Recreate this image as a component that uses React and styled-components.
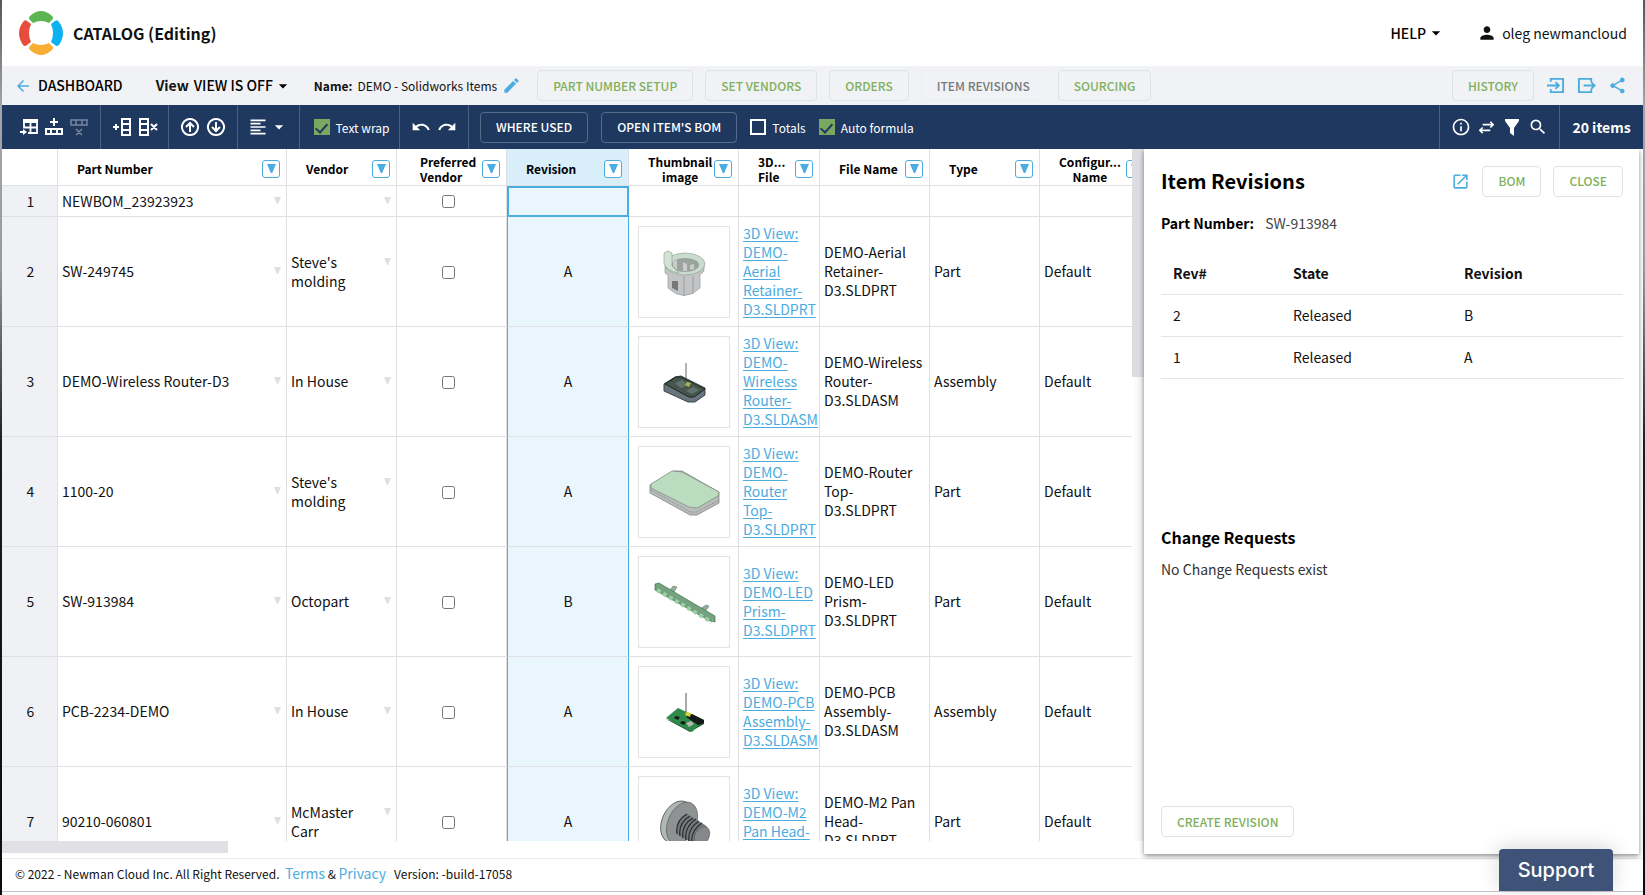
import React from 'react';
import styled, { createGlobalStyle, css } from 'styled-components';
import {
    MdArrowBack,
    MdArrowDropDown,
    MdEdit,
    MdFormatAlignLeft,
    MdInfoOutline,
    MdOpenInNew,
    MdPerson,
    MdRedo,
    MdSearch,
    MdShare,
    MdUndo
} from 'react-icons/md';

const colors = {
    navy: '#1f385f',
    blue: '#4bacdf',
    green: '#7fb05c',
    line: '#dfe0e4',
    bar: '#f1f2f5'
};

const GlobalStyle = createGlobalStyle`
    * {
        box-sizing: border-box;
    }

    body {
        margin: 0;
        color: #111;
        font-family: "Noto Sans CJK SC", "Noto Sans", sans-serif;
        font-size: 14px;
        line-height: 19px;
    }

    button, input {
        font: inherit;
    }

    svg {
        display: block;
        flex: none;
    }
`;

const Frame = styled.div`
    height: 100vh;
    padding: 0 2px;
    background: linear-gradient(#55565a, #a5a6a9 12%, #98999c 30%, #1b1b1f 50%, #0c0c10);
`;

const Page = styled.div`
    display: flex;
    flex-direction: column;
    height: 100%;
    background: #fff;
`;

const Header = styled.header`
    display: flex;
    flex: none;
    align-items: center;
    height: 66px;
    padding: 0 16px;
`;

const Title = styled.h1`
    flex: 1;
    margin: 0 0 0 9px;
    font-size: 16px;
    font-weight: 700;
    line-height: 24px;
`;

const PlainButton = styled.button`
    display: flex;
    align-items: center;
    padding: 0;
    border: 0;
    background: none;
    color: ${props => props.$color || '#000'};
    font-size: 14px;
    font-weight: ${props => props.$weight || 400};
    white-space: nowrap;
    cursor: pointer;
`;

const User = styled.div`
    display: flex;
    align-items: center;
    gap: 5px;
    margin-left: 31px;
`;

const SubBar = styled.nav`
    display: flex;
    flex: none;
    align-items: center;
    height: 39px;
    padding: 0 16px 0 12px;
    background: ${colors.bar};
    white-space: nowrap;
`;

const BackLink = styled.a`
    display: flex;
    align-items: center;
    gap: 6px;
    color: #000;
    font-weight: 500;
    text-decoration: none;

    svg {
        color: ${colors.blue};
    }
`;

const ViewSwitch = styled.div`
    display: flex;
    gap: 5px;
    margin: 0 21px 0 33px;
    font-weight: 700;
`;

const CatalogName = styled.div`
    display: flex;
    align-items: center;
    gap: 5px;
    margin-right: 16px;
    font-size: 12px;
`;

const ButtonRow = styled.div`
    display: flex;
    flex: ${props => (props.$grow ? 1 : 'none')};
    align-items: center;
    gap: 12px;
`;

const OutlineButton = styled.button`
    height: 31px;
    padding: 0 15px;
    border: 1px solid #dfe2e2;
    border-radius: 4px;
    background: transparent;
    color: ${colors.green};
    font-size: 12px;
    font-weight: 500;
    line-height: 18px;
    white-space: nowrap;
    cursor: pointer;

    ${props => props.$active && css`
        border-color: #eceef0;
        color: #76797d;
    `}

    ${props => props.$dark && css`
        border-color: #566a8a;
        color: #fff;
    `}
`;

const Toolbar = styled.div`
    display: flex;
    flex: none;
    height: 44px;
    background: ${colors.navy};
    color: #fff;
`;

const ToolGroup = styled.div`
    display: flex;
    flex: ${props => (props.$grow ? 1 : 'none')};
    align-items: center;
    justify-content: ${props => (props.$grow ? 'flex-start' : 'center')};
    gap: ${props => props.$gap || 6}px;
    width: ${props => (props.$width ? `${props.$width}px` : 'auto')};
    padding-left: ${props => props.$start || 0}px;
    border-right: 1px solid #4c6080;

    &:last-child {
        border-right: 0;
    }
`;

const ItemCount = styled.span`
    font-weight: 700;
`;

const CheckLabel = styled.label`
    display: flex;
    align-items: center;
    gap: 6px;
    font-size: 12px;
    white-space: nowrap;
`;

const ToolCheck = styled.input`
    display: grid;
    place-items: center;
    width: 16px;
    height: 16px;
    margin: 0;
    border: 2px solid #fff;
    appearance: none;

    &:checked {
        border-color: #79a860;
        background: #79a860;
    }

    &:checked::after {
        content: '';
        width: 5px;
        height: 10px;
        margin-bottom: 3px;
        border: solid ${colors.navy};
        border-width: 0 2px 2px 0;
        transform: rotate(42deg);
    }
`;

const Main = styled.main`
    display: flex;
    flex: 1;
    min-height: 0;
`;

const GridArea = styled.section`
    display: grid;
    flex: 1;
    grid-template: minmax(0, 1fr) 17px / minmax(0, 1fr) 12px;
    min-width: 0;
`;

const GridViewport = styled.div`
    overflow: hidden;
`;

const VerticalTrack = styled.div`
    background: linear-gradient(90deg, #fff, #f1f1f3);
`;

const VerticalThumb = styled.div`
    height: 33%;
    background: #dcdde0;
`;

const HorizontalThumb = styled.div`
    width: 20%;
    height: 12px;
    background: #e0e0e5;
`;

const Grid = styled.table`
    width: 1149px;
    border-spacing: 0;
    table-layout: fixed;
`;

const HeadCell = styled.th`
    height: 37px;
    padding: 3px 6px 0 19px;
    border-right: 1px solid ${colors.line};
    border-bottom: 1px solid ${colors.line};
    background: ${props => (props.$selected ? '#d8eef9' : '#fff')};
    color: #000;
    font-size: 12px;
    font-weight: 700;
    line-height: 15px;
`;

const HeadInner = styled.div`
    display: flex;
    align-items: center;
    justify-content: space-between;
    gap: 2px;
    text-align: ${props => (props.$center ? 'center' : 'left')};
    white-space: nowrap;
`;

const HeadText = styled.span`
    padding-left: ${props => (props.$shift ? 4 : 0)}px;
`;

const FilterButton = styled.button`
    display: flex;
    flex: none;
    align-items: center;
    justify-content: center;
    width: 18px;
    height: 18px;
    padding: 0;
    border: 1px solid ${colors.blue};
    border-radius: 3px;
    background: #fff;
    color: ${colors.blue};
`;

const Cell = styled.td`
    height: ${props => (props.$short ? 31 : 110)}px;
    padding: 0 4px;
    border-right: 1px solid ${colors.line};
    border-bottom: 1px solid ${colors.line};
    overflow: hidden;
    text-align: ${props => (props.$center ? 'center' : 'left')};

    ${props => props.$selected && css`
        border-right-color: ${colors.blue};
        border-left: 1px solid ${colors.blue};
        background: #eaf6fd;
    `}

    ${props => props.$focused && css`
        border: 2px solid ${colors.blue};
    `}
`;

const NumberCell = styled.th`
    padding: 0 0 0 2px;
    border-right: 1px solid ${colors.line};
    border-bottom: 1px solid ${colors.line};
    background: #f0f1f5;
    font-weight: 400;
`;

const Editable = styled.div`
    display: flex;
    align-items: flex-start;
    justify-content: space-between;
    min-height: 19px;
    padding-right: 1px;
`;

const CellMarker = styled.span`
    padding-top: 5px;
    color: #dfdfe2;
`;

const GridCheck = styled.input`
    width: 13px;
    height: 13px;
    margin: 5px 6px 0 0;
`;

const ViewLink = styled.a`
    color: ${colors.blue};
    text-underline-offset: 2px;
`;

const Thumb = styled.div`
    width: 92px;
    height: 92px;
    margin: 0 auto;
    border: 1px solid #e3e4e6;
`;

const Panel = styled.aside`
    display: flex;
    flex: 0 0 495px;
    flex-direction: column;
    margin: 0 4px 4px 0;
    padding: 15px 16px 15px 17px;
    background: #fff;
    box-shadow: 0 2px 5px rgba(0, 0, 0, 0.45);
    clip-path: inset(0 -6px -8px -10px);
`;

const PanelHead = styled.div`
    display: flex;
    align-items: center;
    gap: 12px;
    height: 34px;
    color: ${colors.blue};
`;

const PanelTitle = styled.h2`
    flex: 1;
    margin: 0;
    color: #000;
    font-size: 20px;
    font-weight: 700;
    line-height: 28px;
`;

const PartLine = styled.p`
    display: flex;
    gap: 11px;
    margin: 16px 0 20px;
    color: #444;

    strong {
        color: #000;
    }
`;

const RevisionTable = styled.table`
    width: 100%;
    border-spacing: 0;
    table-layout: fixed;
    text-align: left;

    th, td {
        height: 42px;
        padding: 0 12px;
        border-bottom: 1px solid #e3e5e6;
    }
`;

const SectionTitle = styled.h3`
    margin: 146px 0 11px;
    color: #000;
    font-size: 16px;
    font-weight: 700;
    line-height: 24px;
`;

const Note = styled.p`
    flex: 1;
    margin: 0;
    color: #333;
`;

const PanelFoot = styled.div`
    padding-bottom: 2px;
`;

const Footer = styled.footer`
    display: flex;
    flex: none;
    align-items: center;
    height: 34px;
    margin-bottom: 3px;
    padding: 0 30px 0 13px;
    border-top: 1px solid #ebecee;
    border-bottom: 1px solid #c4c5c8;
    font-size: 12px;

    a {
        color: ${colors.blue};
        font-size: 14px;
        text-decoration: none;
    }
`;

const Legal = styled.span`
    flex: 1;
    padding-bottom: 3px;
    white-space: pre;
`;

const SupportButton = styled.button`
    z-index: 1;
    align-self: flex-end;
    flex: none;
    width: 114px;
    height: 42px;
    border: 0;
    border-radius: 4px 4px 0 0;
    background: #3e5377;
    box-shadow: 0 -2px 20px rgba(0, 0, 0, 0.16);
    color: #fff;
    font-family: Inter, sans-serif;
    font-size: 20px;
    font-weight: 500;
`;

const Logo = () => <svg width="46" height="46" viewBox="0 0 46 46">
    <path fill="#5cb552" d="M12 6 Q23 -4 34 6 Q36 8 34 10 L31 13 Q23 9 15 13 L12 10 Q10 8 12 6Z" />
    <path fill="#f9ae35" d="M12 40 Q23 50 34 40 Q36 38 34 36 L31 33 Q23 37 15 33 L12 36 Q10 38 12 40Z" />
    <path fill="#e84c3d" d="M5 12 Q-3 23 5 35 Q7 37 9 35 L13 32 Q9 23 13 14 L9 11 Q7 9 5 12Z" />
    <path fill="#0cb2f0" d="M41 12 Q49 23 41 35 Q39 37 37 35 L33 32 Q37 23 33 14 L37 11 Q39 9 41 12Z" />
</svg>;

const Stroke = ({ d, size = 20, width = 2, color = 'currentColor' }) =>
    <svg width={size} height={size} viewBox="0 0 20 20" fill="none" stroke={color} strokeWidth={width}>
        <path d={d} />
    </svg>;

const Triangle = ({ size }) => <svg width={size} height={size} viewBox="0 0 8 8" fill="currentColor">
    <path d="M0 0H8L4.600 8H3.400Z" />
</svg>;

const InsertRowIcon = () => <svg width="20" height="20" viewBox="0 0 20 20">
    <path fill="currentColor" d="M4 2H19V6H4Z" />
    <path fill="none" stroke="currentColor" strokeWidth="1.800" d="M5 4V10.500H18M18 4V16H9M11.500 5V16" />
    <path fill="currentColor" d="M1 14H4V12L8 15L4 18V16H1Z" />
</svg>;

const thumbs = {
    retainer: <>
        <path fill="#c2c4c6" stroke="#8f9294" strokeWidth=".6" d="M26 38V46L29 48V61Q45 76 61 61V48L65 44V38Z" />
        <ellipse cx="46" cy="37" rx="20" ry="11" fill="#c9dccd" stroke="#8a9b8e" strokeWidth=".6" />
        <ellipse cx="46" cy="38" rx="14" ry="7" fill="#9aa39e" />
        <path fill="#c9ccca" d="M34 39V34L38 33V43ZM44 44V35L48 37V44ZM51 38L55 37V42L51 43Z" />
        <path fill="#d2e3d5" stroke="#8a9b8e" strokeWidth=".6" d="M25 35V26L29 24L33 26L33 39L40 46Q28 44 25 37Z" />
        <path fill="#777" d="M33 54H39V64L33 61Z" />
        <path fill="none" stroke="#9b9d9f" d="M45 49V69M54 49V67" />
    </>,
    router: <>
        <path stroke="#999" strokeWidth="1.500" d="M47 26V43" />
        <path fill="#69757e" stroke="#3f474b" d="M25 47L36 40L42 39L66 51V58L56 65L49 65L25 54Z" />
        <path fill="#46564f" stroke="#1d2424" d="M26 47L37 40L42 40L66 52L55 60L50 60Z" />
        <path fill="#60746d" d="M36 46L43 43L49 48L42 51ZM47 54L54 50L60 53L53 57Z" />
        <path fill="#a8b54b" d="M48 45L52 46L50 50L46 48Z" />
    </>,
    top: <>
        <path fill="#b8bcba" stroke="#777" strokeWidth=".7" d="M11 38L34 24H43L80 45V56L58 68H51L11 46Z" />
        <path fill="#bcdcc0" stroke="#798b7c" strokeWidth=".7" d="M12 37L33 24L43 25L80 45L79 49L58 61L50 60L12 41Z" />
        <path fill="none" stroke="#888" strokeWidth=".8" strokeDasharray="2 1" d="M12 43L51 65H58L80 53" />
    </>,
    prism: <>
        <path fill="#98aa9c" stroke="#66836c" strokeWidth=".6" d="M31 33L34 29L38 30L35 35ZM61 52L67 48L70 49L66 55Z" />
        <path fill="#6ca779" stroke="#457252" strokeWidth=".7" d="M16 27L20 26L76 59V65L71 64L16 33Z" />
        <path fill="none" stroke="#9ccfa6" strokeWidth="4" strokeDasharray="4 3" d="M18 33L73 65" />
        <path fill="none" stroke="#8f9192" strokeDasharray="2 2" strokeWidth="2" d="M18 29L75 62" />
    </>,
    pcb: <>
        <path stroke="#aaa" strokeWidth="2" d="M47 26V46" />
        <path fill="#1f5f35" d="M27 52L51 65L65 57V54L53 60Z" />
        <path fill="#2f8a4b" d="M27 51L39 41L65 53L53 65Z" />
        <path fill="#151917" d="M47 50L53 47L65 53V56L59 58ZM37 49L41 50L39 53L35 51ZM43 54L47 55L45 58L41 56Z" />
        <path fill="#d8cf32" d="M47 45L52 46L51 50L46 48Z" />
        <path fill="#b5b9b4" d="M47 56L52 54L55 57L50 60Z" />
    </>,
    screw: <>
        <ellipse cx="38" cy="45" rx="15" ry="22" fill="#b0b8b5" stroke="#55595a" strokeWidth=".8" transform="rotate(24 38 45)" />
        <ellipse cx="43" cy="46" rx="14" ry="22" fill="#8f9293" stroke="#55595a" strokeWidth=".6" transform="rotate(24 43 46)" />
        <path fill="#77797c" d="M48 37L66 48Q71 52 69 60Q64 70 56 68L38 57Q36 44 48 37Z" />
        <path fill="none" stroke="#27292b" strokeWidth="1.200" d="M48 37Q36 44 38 57M51 39Q39 46 41 59M54 41Q42 48 44 61M57 42Q45 50 47 63M60 44Q48 52 50 65M63 46Q51 54 53 67" />
        <ellipse cx="63" cy="59" rx="7" ry="10" fill="#85878a" stroke="#55595a" strokeWidth=".6" transform="rotate(28 63 59)" />
    </>
};

const columns = [
    { label: 'Part Number', width: 229 },
    { label: 'Vendor', width: 110 },
    { label: 'Preferred', second: 'Vendor', width: 110, shift: true },
    { label: 'Revision', width: 122, selected: true },
    { label: 'Thumbnail', second: 'image', width: 110, center: true },
    { label: '3D...', second: 'File', width: 81 },
    { label: 'File Name', width: 110 },
    { label: 'Type', width: 110 },
    { label: 'Configur...', second: 'Name', width: 111, center: true }
];

const items = [
    { part: 'NEWBOM_23923923', short: true },
    { part: 'SW-249745', vendor: "Steve's molding", rev: 'A', thumb: 'retainer', file: 'DEMO-Aerial Retainer-D3.SLDPRT', type: 'Part' },
    { part: 'DEMO-Wireless Router-D3', vendor: 'In House', rev: 'A', thumb: 'router', file: 'DEMO-Wireless Router-D3.SLDASM', type: 'Assembly' },
    { part: '1100-20', vendor: "Steve's molding", rev: 'A', thumb: 'top', file: 'DEMO-Router Top-D3.SLDPRT', type: 'Part' },
    { part: 'SW-913984', vendor: 'Octopart', rev: 'B', thumb: 'prism', file: 'DEMO-LED Prism-D3.SLDPRT', type: 'Part' },
    { part: 'PCB-2234-DEMO', vendor: 'In House', rev: 'A', thumb: 'pcb', file: 'DEMO-PCB Assembly-D3.SLDASM', type: 'Assembly' },
    { part: '90210-060801', vendor: 'McMaster Carr', rev: 'A', thumb: 'screw', file: 'DEMO-M2 Pan Head-D3.SLDPRT', type: 'Part' }
];

const revisions = [
    { number: 2, state: 'Released', revision: 'B' },
    { number: 1, state: 'Released', revision: 'A' }
];

const TopHeader = () => <Header>
    <Logo />
    <Title>CATALOG (Editing)</Title>
    <PlainButton $weight={500}>HELP<MdArrowDropDown size={20} /></PlainButton>
    <User><MdPerson size={20} />oleg newmancloud</User>
</Header>;

const CatalogBar = () => <SubBar>
    <BackLink href="#dashboard"><MdArrowBack size={18} />DASHBOARD</BackLink>
    <ViewSwitch>
        View
        <PlainButton $weight={500}>VIEW IS OFF<MdArrowDropDown size={20} /></PlainButton>
    </ViewSwitch>
    <CatalogName>
        <strong>Name:</strong>DEMO - Solidworks Items
        <PlainButton $color={colors.blue} aria-label="Edit name"><MdEdit size={19} /></PlainButton>
    </CatalogName>
    <ButtonRow $grow>
        <OutlineButton>PART NUMBER SETUP</OutlineButton>
        <OutlineButton>SET VENDORS</OutlineButton>
        <OutlineButton>ORDERS</OutlineButton>
        <OutlineButton $active>ITEM REVISIONS</OutlineButton>
        <OutlineButton>SOURCING</OutlineButton>
    </ButtonRow>
    <ButtonRow>
        <OutlineButton>HISTORY</OutlineButton>
        <PlainButton $color={colors.blue} aria-label="Import">
            <Stroke size={19} d="M5 6V3H18V17H5V14M1 10H13M10 6.500L13.500 10L10 13.500" />
        </PlainButton>
        <PlainButton $color={colors.blue} aria-label="Export">
            <Stroke size={19} d="M15 6V3H2V17H15V14M7 10H18M15 6.500L18.500 10L15 13.500" />
        </PlainButton>
        <PlainButton $color={colors.blue} aria-label="Share"><MdShare size={19} /></PlainButton>
    </ButtonRow>
</SubBar>;

const ToolRow = () => <Toolbar>
    <ToolGroup $width={99} $gap={5} $start={6}>
        <InsertRowIcon />
        <Stroke d="M10 1V9M6 5H14M2 18V12H18V18M2 17H18M7 12V18M13 12V18" />
        <Stroke color="#7886a0" width={1.500} d="M2 3H18V8H2ZM7 3V8M13 3V8M7 12L13 18M13 12L7 18" />
    </ToolGroup>
    <ToolGroup $width={68}>
        <Stroke d="M1 10H7M4 7V13M10 2H18V18H10ZM10 7H18M10 13H18" />
        <Stroke d="M2 2H10V18H2ZM2 7H10M2 13H10M13 7L19 13M19 7L13 13" />
    </ToolGroup>
    <ToolGroup $width={69}>
        <Stroke d="M10 2A8 8 0 1 1 9.990 2ZM10 15V6M6 10L10 6L14 10" />
        <Stroke d="M10 2A8 8 0 1 1 9.990 2ZM10 5V14M6 10L10 14L14 10" />
    </ToolGroup>
    <ToolGroup $width={62} $gap={1}>
        <MdFormatAlignLeft size={20} />
        <MdArrowDropDown size={20} />
    </ToolGroup>
    <ToolGroup $width={100} $start={4}>
        <CheckLabel><ToolCheck type="checkbox" defaultChecked />Text wrap</CheckLabel>
    </ToolGroup>
    <ToolGroup $width={69}>
        <MdUndo size={20} />
        <MdRedo size={20} />
    </ToolGroup>
    <ToolGroup $grow $gap={13} $start={11}>
        <OutlineButton $dark>WHERE USED</OutlineButton>
        <OutlineButton $dark>OPEN ITEM'S BOM</OutlineButton>
        <CheckLabel><ToolCheck type="checkbox" />Totals</CheckLabel>
        <CheckLabel><ToolCheck type="checkbox" defaultChecked />Auto formula</CheckLabel>
    </ToolGroup>
    <ToolGroup $width={120}>
        <MdInfoOutline size={20} />
        <Stroke size={19} d="M6 7H17M14 4L17 7L14 10M14 13H3M6 10L3 13L6 16" width={1.700} />
        <svg width="20" height="20" viewBox="0 0 20 20" fill="currentColor">
            <path d="M3 2H17V4L12 11V19L8 16V11L3 4Z" />
        </svg>
        <MdSearch size={20} />
    </ToolGroup>
    <ToolGroup $width={83}><ItemCount>20 items</ItemCount></ToolGroup>
</Toolbar>;

const ColumnHead = ({ column }) => <HeadCell $selected={column.selected}>
    <HeadInner $center={column.center}>
        <HeadText $shift={column.shift}>
            {column.label}
            {column.second && <><br />{column.second}</>}
        </HeadText>
        <FilterButton aria-label={`Filter ${column.label}`}><Triangle size={9} /></FilterButton>
    </HeadInner>
</HeadCell>;

const ItemRow = ({ item, index }) => <tr>
    <NumberCell scope="row">{index + 1}</NumberCell>
    <Cell $short={item.short}>
        <Editable>{item.part}<CellMarker><Triangle size={7} /></CellMarker></Editable>
    </Cell>
    <Cell $short={item.short}>
        <Editable><span>{item.vendor}</span><CellMarker><Triangle size={7} /></CellMarker></Editable>
    </Cell>
    <Cell $short={item.short} $center>
        <GridCheck type="checkbox" aria-label={`Preferred vendor for ${item.part}`} />
    </Cell>
    <Cell $short={item.short} $center $selected $focused={index === 0}>{item.rev}</Cell>
    <Cell $short={item.short}>
        {item.thumb && <Thumb><svg width="90" height="90" viewBox="0 0 90 90">{thumbs[item.thumb]}</svg></Thumb>}
    </Cell>
    <Cell $short={item.short}>
        {item.file && <ViewLink href="#view">3D View: {item.file}</ViewLink>}
    </Cell>
    <Cell $short={item.short}>{item.file}</Cell>
    <Cell $short={item.short}>{item.type}</Cell>
    <Cell $short={item.short}>{item.type && 'Default'}</Cell>
</tr>;

const ItemGrid = () => <GridArea>
    <GridViewport>
        <Grid>
            <colgroup>
                <col width={56} />
                {columns.map(column => <col key={column.label} width={column.width} />)}
            </colgroup>
            <thead>
                <tr>
                    <HeadCell />
                    {columns.map(column => <ColumnHead key={column.label} column={column} />)}
                </tr>
            </thead>
            <tbody>
                {items.map((item, index) => <ItemRow key={item.part} item={item} index={index} />)}
            </tbody>
        </Grid>
    </GridViewport>
    <VerticalTrack><VerticalThumb /></VerticalTrack>
    <HorizontalThumb />
</GridArea>;

const RevisionPanel = () => <Panel>
    <PanelHead>
        <PanelTitle>Item Revisions</PanelTitle>
        <MdOpenInNew size={19} />
        <OutlineButton>BOM</OutlineButton>
        <OutlineButton>CLOSE</OutlineButton>
    </PanelHead>
    <PartLine><strong>Part Number:</strong>SW-913984</PartLine>
    <RevisionTable>
        <colgroup>
            <col width="26%" />
            <col width="37%" />
            <col />
        </colgroup>
        <thead>
            <tr><th>Rev#</th><th>State</th><th>Revision</th></tr>
        </thead>
        <tbody>
            {revisions.map(row => <tr key={row.number}>
                <td>{row.number}</td>
                <td>{row.state}</td>
                <td>{row.revision}</td>
            </tr>)}
        </tbody>
    </RevisionTable>
    <SectionTitle>Change Requests</SectionTitle>
    <Note>No Change Requests exist</Note>
    <PanelFoot><OutlineButton>CREATE REVISION</OutlineButton></PanelFoot>
</Panel>;

const App = () => <Frame>
    <GlobalStyle />
    <Page>
        <TopHeader />
        <CatalogBar />
        <ToolRow />
        <Main>
            <ItemGrid />
            <RevisionPanel />
        </Main>
        <Footer>
            <Legal>
                © 2022 - Newman Cloud Inc. All Right Reserved.{'  '}
                <a href="#terms">Terms</a> & <a href="#privacy">Privacy</a>{'   '}Version: -build-17058
            </Legal>
            <SupportButton>Support</SupportButton>
        </Footer>
    </Page>
</Frame>;

export default App;
